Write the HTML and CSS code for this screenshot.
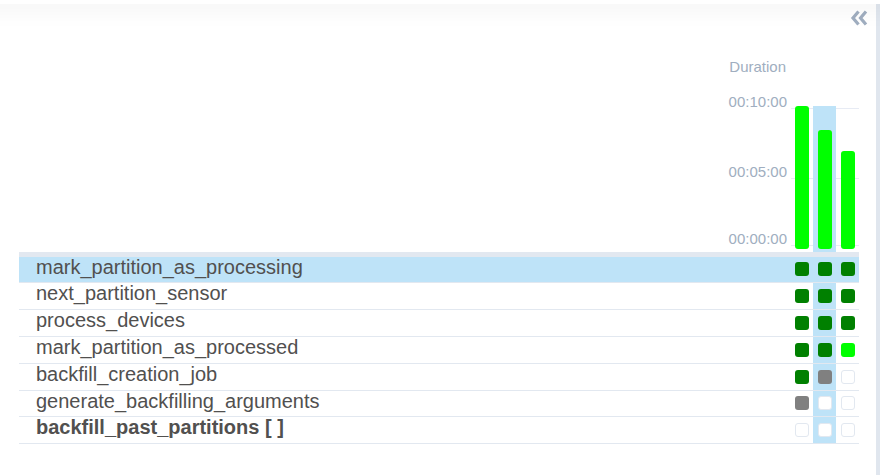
FILE: index.html
```html
<!DOCTYPE html>
<html lang="en">
<head>
<meta charset="utf-8">
<title>Grid</title>
<link rel="stylesheet" href="styles.css">
</head>
<body>
<div class="topbar"></div>
<div class="layout">
  <main class="main">
    <div class="toolbar">
      <button class="collapse" type="button" aria-label="Collapse">
        <svg width="18" height="16" viewBox="0 0 18 16" aria-hidden="true">
          <path d="M8.5 1.5 L3 8 L8.5 14.5" fill="none" stroke="#a0aec0" stroke-width="3.2" stroke-linejoin="miter"/>
          <path d="M16 1.5 L10.5 8 L16 14.5" fill="none" stroke="#a0aec0" stroke-width="3.2" stroke-linejoin="miter"/>
        </svg>
      </button>
    </div>
    <div class="grid">
      <div class="head">
        <div class="head-spacer"></div>
        <div class="plot">
          <span class="axis-title">Duration</span>
          <div class="gridline g-top"><span class="tick">00:10:00</span></div>
          <div class="gridline g-mid"><span class="tick">00:05:00</span></div>
          <div class="gridline g-low"><span class="tick">00:00:00</span></div>
          <div class="cols">
            <div class="col"><div class="bar" style="height:143px"></div></div>
            <div class="col active"><div class="bar" style="height:119px"></div></div>
            <div class="col"><div class="bar" style="height:98px"></div></div>
          </div>
        </div>
      </div>
      <div class="band"></div>

      <div class="row selected">
        <div class="name">mark_partition_as_processing</div>
        <div class="cell"><span class="sq success"></span></div>
        <div class="cell active"><span class="sq success"></span></div>
        <div class="cell"><span class="sq success"></span></div>
      </div>
      <div class="row">
        <div class="name">next_partition_sensor</div>
        <div class="cell"><span class="sq success"></span></div>
        <div class="cell active"><span class="sq success"></span></div>
        <div class="cell"><span class="sq success"></span></div>
      </div>
      <div class="row">
        <div class="name">process_devices</div>
        <div class="cell"><span class="sq success"></span></div>
        <div class="cell active"><span class="sq success"></span></div>
        <div class="cell"><span class="sq success"></span></div>
      </div>
      <div class="row">
        <div class="name">mark_partition_as_processed</div>
        <div class="cell"><span class="sq success"></span></div>
        <div class="cell active"><span class="sq success"></span></div>
        <div class="cell"><span class="sq running"></span></div>
      </div>
      <div class="row">
        <div class="name">backfill_creation_job</div>
        <div class="cell"><span class="sq success"></span></div>
        <div class="cell active"><span class="sq skipped"></span></div>
        <div class="cell"><span class="sq empty"></span></div>
      </div>
      <div class="row">
        <div class="name">generate_backfilling_arguments</div>
        <div class="cell"><span class="sq skipped"></span></div>
        <div class="cell active"><span class="sq empty"></span></div>
        <div class="cell"><span class="sq empty"></span></div>
      </div>
      <div class="row">
        <div class="name group">backfill_past_partitions [ ]</div>
        <div class="cell"><span class="sq empty"></span></div>
        <div class="cell active"><span class="sq empty"></span></div>
        <div class="cell"><span class="sq empty"></span></div>
      </div>
    </div>
  </main>
  <div class="edge"></div>
</div>
</body>
</html>
```

FILE: styles.css
```css
html, body {
  margin: 0;
  padding: 0;
  background: #ffffff;
  overflow: hidden;
  font-family: "Liberation Sans", Arial, sans-serif;
}

.topbar {
  position: relative;
  z-index: 2;
  height: 4px;
  margin: 0 -40px;
  background: #ffffff;
  box-shadow: 0 0 24px rgba(0, 0, 0, 0.2);
}

.layout {
  display: flex;
  height: calc(100vh - 4px);
}

.main {
  flex: 1;
  min-width: 0;
}

.edge {
  width: 4px;
  background: #e0e6ee;
}

.toolbar {
  display: flex;
  justify-content: flex-end;
  height: 22px;
  padding: 6px 8px 0 0;
  box-sizing: border-box;
}

.collapse {
  display: flex;
  padding: 0;
  margin: 0;
  border: 0;
  background: none;
  cursor: pointer;
  height: 16px;
}

.grid {
  margin-left: 19px;
  width: 840px;
}

.head {
  display: flex;
  height: 226px;
}

.head-spacer {
  flex: 1;
}

.plot {
  position: relative;
  z-index: 0;
  width: 69px;
  display: flex;
  flex-direction: column;
  justify-content: flex-end;
}

.axis-title {
  position: absolute;
  top: 32px;
  right: calc(100% + 4px);
  font-size: 15px;
  line-height: 17px;
  color: #a0aec0;
  white-space: nowrap;
}

.gridline {
  position: absolute;
  left: 1px;
  right: 0;
  height: 1px;
  background: #e7ebf4;
  z-index: -1;
}

.g-top { top: 82px; }
.g-mid { top: 152px; }
.g-low { top: 219px; }

.tick {
  position: absolute;
  right: calc(100% + 4px);
  top: -15px;
  font-size: 15px;
  line-height: 17px;
  color: #a0aec0;
  white-space: nowrap;
}

.cols {
  display: flex;
  height: 146px;
}

.col {
  width: 23px;
  height: 100%;
  display: flex;
  align-items: flex-end;
  justify-content: center;
  padding-bottom: 3px;
  box-sizing: border-box;
}

.col.active {
  background: #bee3f8;
}

.bar {
  width: 14px;
  background: #00ff00;
  border-radius: 3px;
}

.band {
  height: 4.6px;
  background: #e2e8f0;
}

.row {
  display: flex;
  height: 26.8px;
  box-sizing: border-box;
  border-bottom: 1px solid #e2e8f0;
}

.row.selected {
  background: #bee3f8;
}

.name {
  flex: 1;
  min-width: 0;
  padding-left: 17px;
  font-size: 20px;
  line-height: 21px;
  color: #51504f;
  white-space: nowrap;
}

.name.group {
  font-weight: bold;
}

.cell {
  width: 23px;
  display: flex;
  align-items: center;
  justify-content: center;
}

.cell.active {
  background: #bee3f8;
}

.sq {
  display: block;
  width: 14px;
  height: 14px;
  border-radius: 3px;
  box-sizing: border-box;
}

.sq.success { background: #008000; }
.sq.running { background: #00ff00; }
.sq.skipped { background: #808080; }
.sq.empty {
  background: #ffffff;
  border: 1px solid #e2e8f0;
}
```
